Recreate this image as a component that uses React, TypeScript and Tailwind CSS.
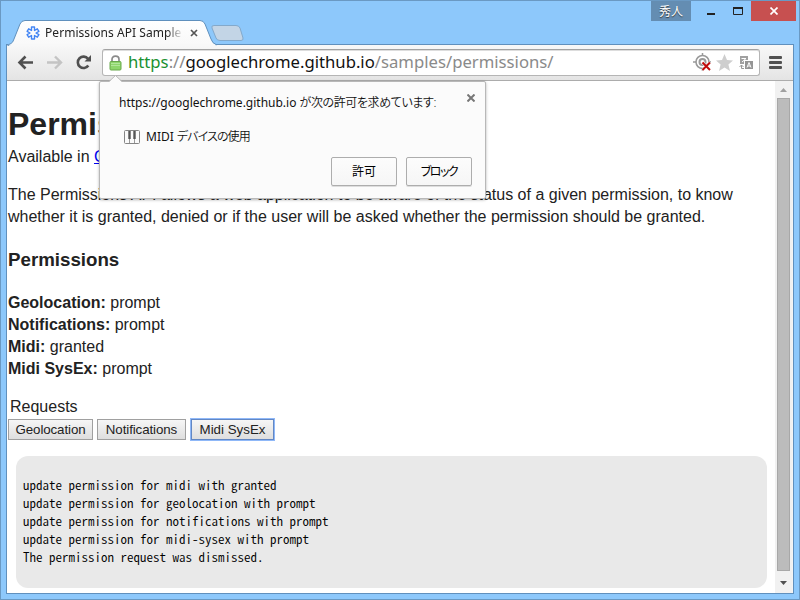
import React from 'react';

const permissions = [
  { name: 'Geolocation:', state: 'prompt' },
  { name: 'Notifications:', state: 'prompt' },
  { name: 'Midi:', state: 'granted' },
  { name: 'Midi SysEx:', state: 'prompt' }
];

const logLines = [
  'update permission for midi with granted',
  'update permission for geolocation with prompt',
  'update permission for notifications with prompt',
  'update permission for midi-sysex with prompt',
  'The permission request was dismissed.'
];

const uiFont = "font-['Noto_Sans','Noto_Sans_CJK_JP',sans-serif]";

function TitleBar() {
  return (
    <div className="relative flex h-11 items-start">
      {/* Tab outlines */}
      <svg className="absolute left-0 top-0" width="260" height="46" viewBox="0 0 260 46">
        <defs>
          <linearGradient id="tabFill" x1="0" y1="0" x2="0" y2="1">
            <stop offset="0" stopColor="#ffffff" />
            <stop offset="1" stopColor="#f8f8f8" />
          </linearGradient>
        </defs>
        <path d="M211 28 Q210 25.500 213 25.500 H235 Q238 25.500 239 28 L242 38 Q242.500 40.500 240 40.500 H219 Q216 40.500 215 38 Z" fill="#c3d5e6" stroke="#83a9cb" />
        <path d="M6.500 46 V47 Q7 44 10 43.500 Q12 42.500 13 39 L19 24 Q20.500 20.500 24 20.500 H199 Q202.500 20.500 204 24 L210 39 Q211.500 43.500 215 44.500 V46 Z" fill="url(#tabFill)" stroke="#6090bd" />
        <path d="M8 46 V45.500 L12 44.500 H212 L216 45.500 V46 Z" fill="#f8f8f8" />
      </svg>

      <div className="relative mt-[21px] flex h-6 w-[210px] items-center pl-[25px]">
        <svg width="14" height="14" viewBox="0 0 14 14" fill="none">
          <path d="M5.500 1 H8.500 V4.500 L11.300 2.800 L12.900 5.400 L10 7 L12.900 8.600 L11.300 11.200 L8.500 9.500 V13 H5.500 V9.500 L2.700 11.200 L1.100 8.600 L4 7 L1.100 5.400 L2.700 2.800 L5.500 4.500 Z" stroke="#4285f4" strokeWidth="1.400" strokeLinejoin="round" />
        </svg>
        <span className={`ml-[5px] w-[138px] overflow-hidden whitespace-nowrap text-xs leading-5 tracking-[0.05px] text-[#222] [mask-image:linear-gradient(to_right,black_122px,transparent_138px)] ${uiFont}`}>
          Permissions API Sample
        </span>
        <svg className="ml-[7px]" width="8" height="8" viewBox="0 0 8 8">
          <path d="M1 1 L7 7 M7 1 L1 7" stroke="#555" strokeWidth="1.700" />
        </svg>
      </div>

      <div className="ml-auto flex h-[21px]">
        <div className="flex w-10 items-center justify-center bg-[#648db2] font-['Noto_Sans_CJK_JP',sans-serif] text-xs leading-5 text-white [text-shadow:0_1px_1px_#333]">
          秀人
        </div>
        <svg width="60" height="20" viewBox="0 0 60 20">
          <path d="M16 14 H24" stroke="#222" strokeWidth="2" />
          <path d="M42.500 7 V14.500 H51.500 V7" fill="none" stroke="#222" />
          <path d="M42 8 H52" stroke="#222" strokeWidth="2" />
        </svg>
        <div className="mr-[3px] flex w-[45px] items-center justify-center bg-[#c75050] pt-px">
          <svg width="8" height="8" viewBox="0 0 8 8">
            <path d="M0.500 0.500 L7.500 7.500 M7.500 0.500 L0.500 7.500" stroke="#fff" strokeWidth="1.700" />
          </svg>
        </div>
      </div>
    </div>
  );
}

function Toolbar() {
  return (
    <div className="flex h-9 shrink-0 items-center border-b border-[#acacac] bg-linear-to-b from-[#f8f8f8] to-[#e4e4e4]">
      <svg className="shrink-0" width="95" height="35" viewBox="7 45 95 35" fill="none">
        <path d="M33 62.500 H20 M25.500 56.500 L19.500 62.500 L25.500 68.500" stroke="#505050" strokeWidth="2.600" />
        <path d="M47 62.500 H60 M55 56.500 L61 62.500 L55 68.500" stroke="#c4c4c4" strokeWidth="2.400" />
        <path d="M88.300 65.500 A5.700 5.700 0 1 1 88 58.800" stroke="#505050" strokeWidth="2.600" />
        <path d="M91 55 V61.500 H84.500 Z" fill="#505050" />
      </svg>
      <div className="flex h-[27px] w-[658px] items-center rounded-[3px] border border-[#b5b5b5] border-t-[#a2a2a2] bg-white pl-[6px] shadow-[inset_0_1px_0_#ddd]">
        <svg className="shrink-0" width="13" height="16" viewBox="0 0 13 16">
          <path d="M3 8 V4.500 Q3 1.200 6.500 1.200 Q10 1.200 10 4.500 V8" fill="none" stroke="#8b8b8b" strokeWidth="1.700" />
          <rect x="1" y="6.500" width="11" height="8.500" rx="1" fill="#8ed66b" stroke="#68a84c" />
          <path d="M2 8.500 H11 M2 10.500 H11" stroke="#b1e69a" />
        </svg>
        <div className={`mb-px ml-[6px] whitespace-nowrap text-[16.7px] leading-6 text-[#8a8a8a] ${uiFont}`}>
          <span className="text-[#1b9131]">https</span>://<span className="text-[#111]">googlechrome.github.io</span>/samples/permissions/
        </div>
        <svg className="ml-auto shrink-0" width="66" height="25" viewBox="693 50 66 25" fill="none">
          <circle cx="702.500" cy="62" r="6.500" stroke="#999" strokeWidth="1.600" />
          <circle cx="702.500" cy="62" r="3" stroke="#999" strokeWidth="2" />
          <path d="M702.500 53 V56 M693 62 H696 M702.500 68 V71 M709 62 H711" stroke="#999" strokeWidth="1.500" />
          <path d="M702.500 62.500 L710.500 70.500 M710.500 62.500 L702.500 70.500" stroke="#fff" strokeWidth="3" />
          <path d="M702.500 62.500 L710 70 M710 62.500 L702.500 70" stroke="#c00b0b" strokeWidth="2" />
          <path d="M724.500 54 L727 60 L733 60.400 L728.400 64.500 L730 71 L724.500 67.400 L719 71 L720.600 64.500 L716 60.400 L722 60 Z" fill="#cecece" />
          <rect x="740" y="56" width="8" height="8" fill="#a0a0a0" />
          <path d="M741.500 58.500 H746 L742 62" stroke="#fff" />
          <rect x="744.500" y="60.500" width="9" height="9" fill="#959595" stroke="#fff" />
          <path d="M747 67.500 L749 62.500 L751 67.500 M748 66 H750" stroke="#fff" />
          <path d="M741.500 65 V68.500 H744 M739.500 67 L741.500 65 L743.500 67" stroke="#999" />
        </svg>
      </div>
      <div className="ml-[9px] flex w-[13px] flex-col gap-[2px]">
        <div className="h-[3px] rounded-[1px] bg-[#505050]" />
        <div className="h-[3px] rounded-[1px] bg-[#505050]" />
        <div className="h-[3px] rounded-[1px] bg-[#505050]" />
      </div>
    </div>
  );
}

function PermissionBubble() {
  const button = 'h-[29px] w-[66px] rounded-xs border border-[#adadad] bg-linear-to-b from-[#fcfcfc] to-[#f6f6f6] text-xs leading-[27px] text-black shadow-[0_1px_0_#ddd]';

  return (
    <div className={`absolute left-[98px] top-[80px] h-[118px] w-[387px] rounded-[2px] border border-[#b8b8b8] bg-[#fbfbfb] text-xs text-[#111] shadow-[0_1px_3px_rgba(0,0,0,0.3)] [font-feature-settings:'palt'] ${uiFont}`}>
      <svg className="absolute left-[9px] top-[-7px]" width="14" height="8" viewBox="0 0 14 8">
        <path d="M0 7 L6.500 0.500 L13 7 V8 H0 Z" fill="#fbfbfb" />
        <path d="M0 6.500 L6.500 0.500 L13 6.500" fill="none" stroke="#bbb" />
      </svg>
      <div className="flex justify-between pl-[19px] pr-[10px] pt-[11px]">
        <span className="whitespace-nowrap leading-5">
          https://googlechrome.github.io <span className="font-[350] tracking-[-0.4px]">が次の許可を求めています:</span>
        </span>
        <svg className="mt-px" width="8" height="8" viewBox="0 0 8 8">
          <path d="M0.500 0.500 L7.500 7.500 M7.500 0.500 L0.500 7.500" stroke="#777" strokeWidth="2" />
        </svg>
      </div>
      <div className="mt-[14px] flex h-5 items-center pl-6">
        <svg width="16" height="14" viewBox="0 0 16 14">
          <rect x="0.500" y="0.500" width="15" height="13" rx="1" fill="#fafafa" stroke="#858585" />
          <path d="M5.500 1 V13 M10.500 1 V13" stroke="#999" />
          <path d="M5.500 1 V9 M10.500 1 V9" stroke="#555" strokeWidth="2.400" />
        </svg>
        <span className="ml-[6px] whitespace-nowrap">MIDI <span className="font-[350] tracking-[-0.9px]">デバイスの使用</span></span>
      </div>
      <div className="mt-[10px] flex justify-end gap-[9px] pr-[13px]">
        <button className={button}>許可</button>
        <button className={`tracking-[-1.5px] ${button}`}>ブロック</button>
      </div>
    </div>
  );
}

function Scrollbar() {
  return (
    <div className="flex w-[17px] shrink-0 flex-col items-center bg-[#f1f1f1]">
      <svg width="17" height="17" viewBox="0 0 17 17">
        <path d="M5 11 L8.500 7 L12 11 Z" fill="#a0a0a0" />
      </svg>
      <div className="w-[13px] flex-1 border border-[#a8a8a8] bg-[#bcbcbc]" />
      <svg width="17" height="22" viewBox="0 0 17 22">
        <path d="M5 10 H12 L8.500 14 Z" fill="#505050" />
      </svg>
    </div>
  );
}

export default function App() {
  const button = 'h-[21px] border border-[#a0a0a0] bg-linear-to-b from-[#f6f6f6] to-[#dedede] text-[13.33px] leading-[19px] tracking-[-0.1px] text-[#222]';

  return (
    <div className="relative h-[600px] w-[800px] overflow-hidden border border-[#6a99c3] bg-[#8dc8fb] px-[6px]">
      <div className="-ml-[6px] -mr-[6px] -mt-px">
        <TitleBar />
      </div>
      <div className="-ml-px flex h-[550px] w-[788px] flex-col border border-[#6090bd] bg-white">
        <Toolbar />
        <div className="flex min-h-0 flex-1">
          <div className="min-w-0 flex-1 pl-px font-['Liberation_Sans',Arial,sans-serif] text-base leading-[22px] text-[#222]">
            <h1 className="mt-[21px] text-[32px] font-bold leading-[44px]">Permissions API Sample</h1>
            <p>
              Available in <a className="text-[#0000ee] underline">Chrome 43+</a>
            </p>
            <p className="mt-4 whitespace-nowrap">
              The Permissions API allows a web application to be aware of the status of a given permission, to know
              <br />
              whether it is granted, denied or if the user will be asked whether the permission should be granted.
            </p>
            <h3 className="mt-[19px] text-[18.72px] font-bold leading-[26px]">Permissions</h3>
            <div className="mt-[19px]">
              {permissions.map((permission) => (
                <div key={permission.name}>
                  <b>{permission.name}</b> {permission.state}
                </div>
              ))}
            </div>
            <div className="mt-4 pl-[2px]">Requests</div>
            <div className="mt-px flex gap-1">
              <button className={`w-[85px] ${button}`}>Geolocation</button>
              <button className={`w-[89px] ${button}`}>Notifications</button>
              <button className="ml-px h-[21px] w-[83px] border border-[#6287c4] bg-linear-to-b from-[#f6f6f6] to-[#dedede] text-[13.33px] leading-[19px] text-[#222] shadow-[0_0_0_1px_#8fb8f8]">
                Midi SysEx
              </button>
            </div>
            <pre className="ml-2 mt-[16px] h-[132px] w-[751px] rounded-xl bg-[#e9e9e9] pl-[7px] pt-[20px] font-['Noto_Sans_CJK_JP',monospace] text-[13px] font-[350] leading-[18px] text-black [font-feature-settings:'hwid'] [font-variant-ligatures:none]">
              {logLines.join('\n')}
            </pre>
          </div>
          <Scrollbar />
          <div className="w-px bg-[#f4f4f4]" />
        </div>
      </div>
      <PermissionBubble />
    </div>
  );
}
